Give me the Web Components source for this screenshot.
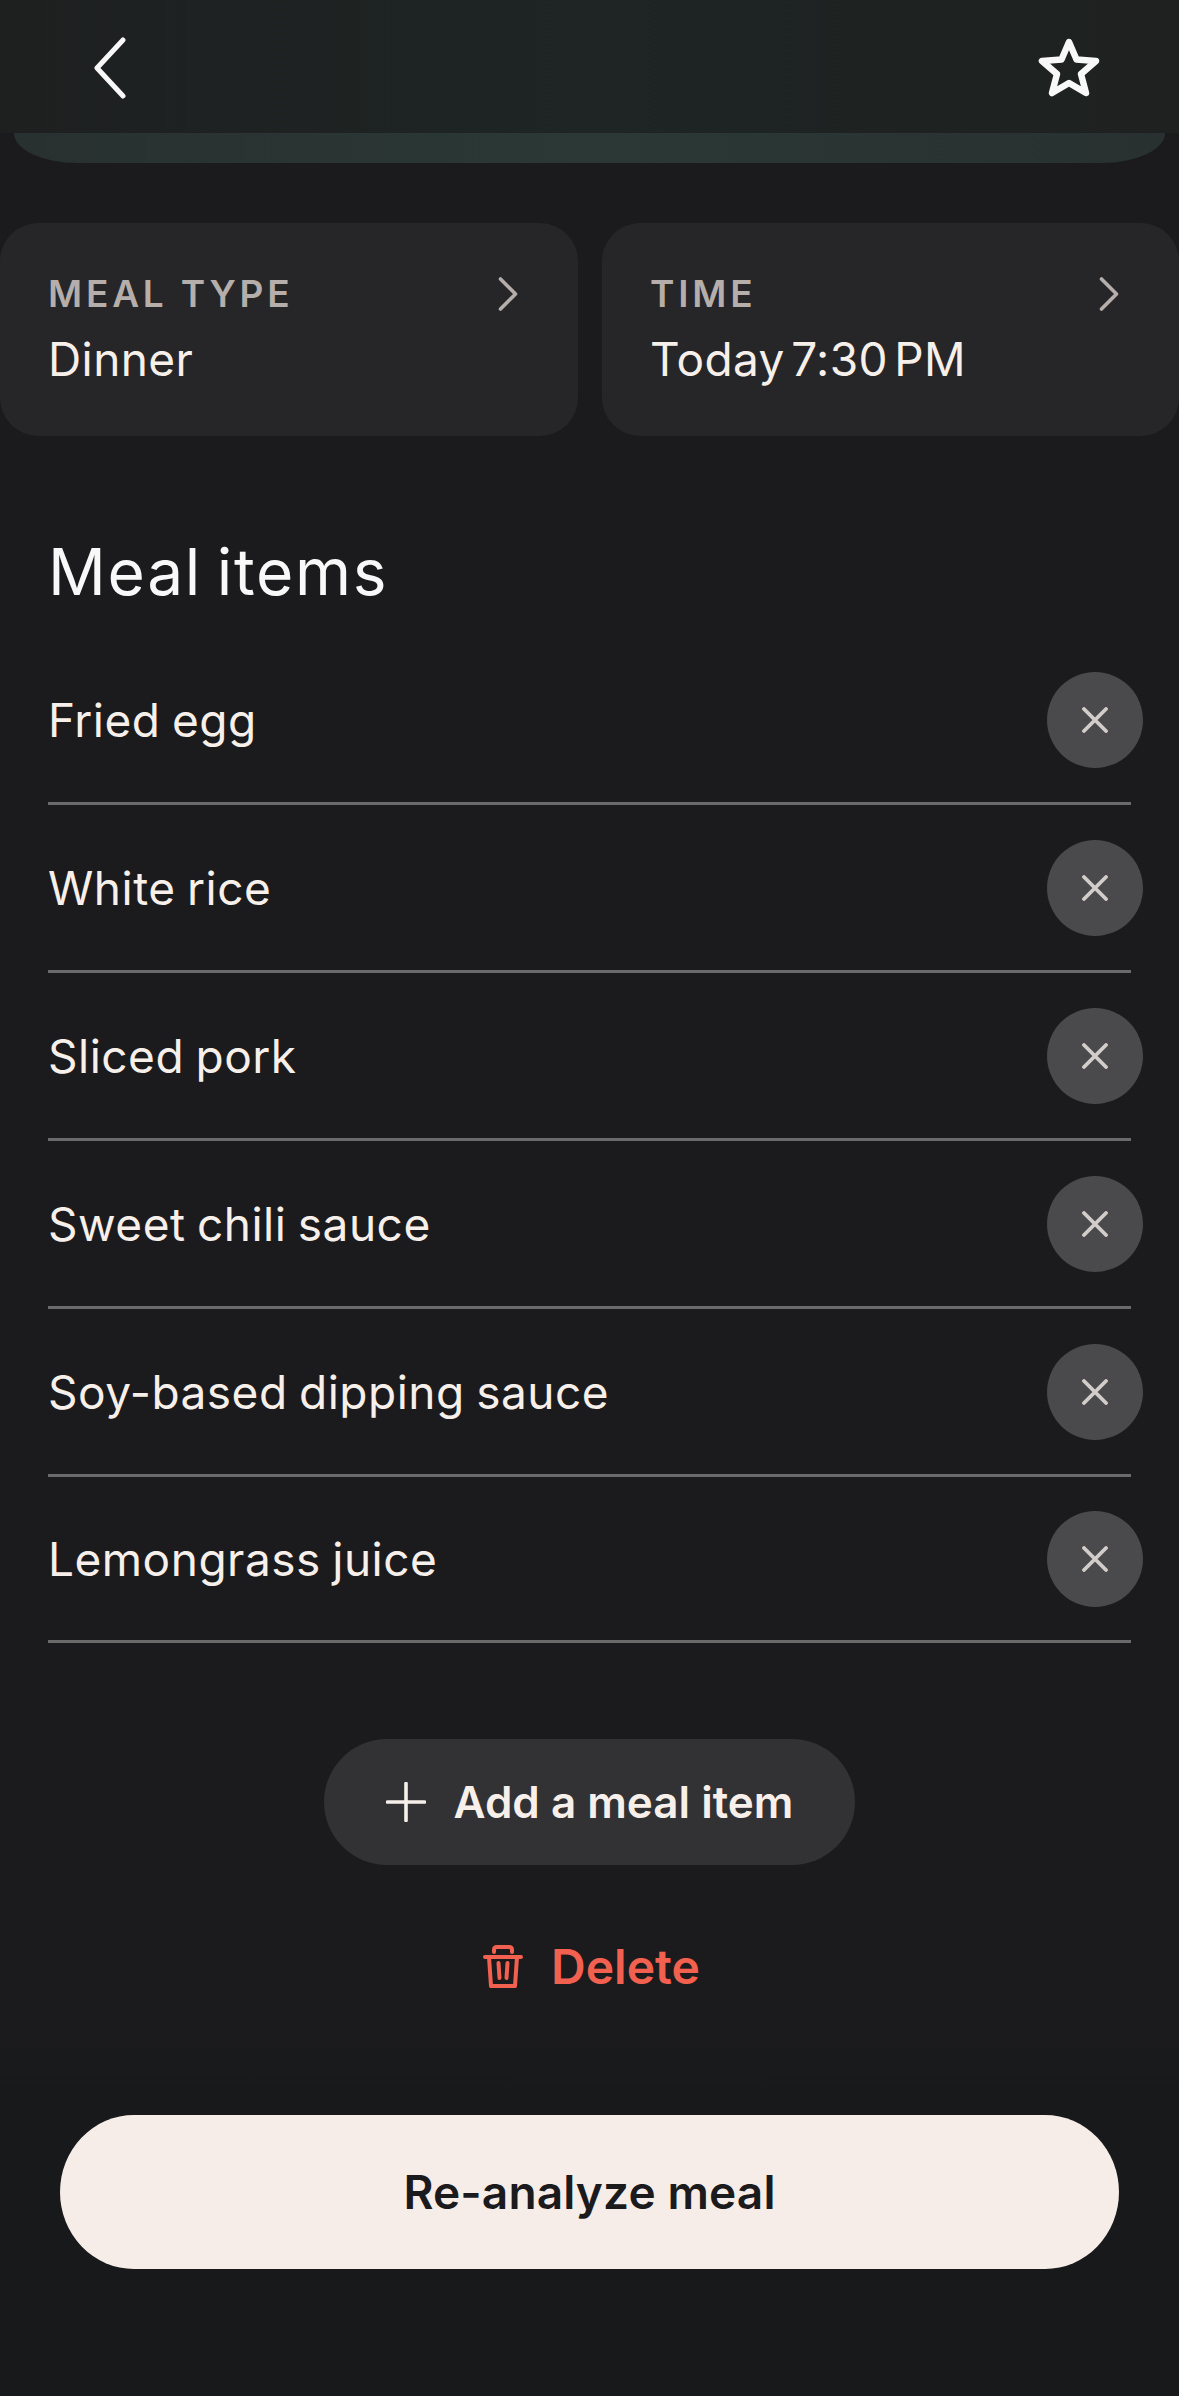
<!DOCTYPE html>
<html>
<head>
<meta charset="utf-8">
<style>
    html, body { margin: 0; padding: 0; background: #1b1b1d; }
    body { width: 1179px; height: 2396px; overflow: hidden; font-family: Inter, "Liberation Sans", sans-serif; }
</style>
</head>
<body>
<meal-screen>
    <top-bar></top-bar>
    <card-row>
        <info-card label="MEAL TYPE" value="Dinner"></info-card>
        <info-card label="TIME" value="Today 7:30 PM"></info-card>
    </card-row>
    <meal-list heading="Meal items">
        <meal-row>Fried egg</meal-row>
        <meal-row>White rice</meal-row>
        <meal-row>Sliced pork</meal-row>
        <meal-row>Sweet chili sauce</meal-row>
        <meal-row>Soy-based dipping sauce</meal-row>
        <meal-row last>Lemongrass juice</meal-row>
    </meal-list>
    <meal-actions></meal-actions>
    <bottom-action>Re-analyze meal</bottom-action>
</meal-screen>

<script>
class MealScreen extends HTMLElement {
    constructor() {
        super();
        this.attachShadow({ mode: 'open' });
        this.shadowRoot.innerHTML = `
            <style>
                :host { display: flex; flex-direction: column; width: 1179px; height: 2396px; color: #f7efea; }
            </style>
            <slot></slot>
        `;
    }
}

class TopBar extends HTMLElement {
    constructor() {
        super();
        this.attachShadow({ mode: 'open' });
        this.shadowRoot.innerHTML = `
            <style>
                :host { display: block; height: 163px; }
                .bar {
                    height: 133px;
                    display: flex;
                    justify-content: space-between;
                    align-items: flex-start;
                    padding: 37px 79px 0 92px;
                    box-sizing: border-box;
                    background: linear-gradient(90deg, #1e2020 0%, #1e2524 50%, #1e2120 100%);
                }
                .band {
                    height: 30px;
                    margin: 0 14px;
                    border-radius: 0 0 64px 64px / 0 0 30px 30px;
                    background: linear-gradient(90deg, #283130 0%, #2b3836 50%, #283130 100%);
                }
                svg { display: block; }
            </style>
            <div class="bar">
                <svg width="34" height="62" viewBox="0 0 34 62" fill="none" stroke="#f8f8f8" stroke-width="5" stroke-linecap="round" stroke-linejoin="round">
                    <path d="M31 3 L5 31 L31 59"/>
                </svg>
                <svg width="62" height="62" viewBox="0 0 62 62" fill="none" stroke="#f8f8f8" stroke-width="6.5" stroke-linejoin="round">
                    <path d="M31 5 L38.5 22.5 L58 24 L43 37 L48 56 L31 46 L14 56 L19 37 L4 24 L23.5 22.5 Z"/>
                </svg>
            </div>
            <div class="band"></div>
        `;
    }
}

class CardRow extends HTMLElement {
    constructor() {
        super();
        this.attachShadow({ mode: 'open' });
        this.shadowRoot.innerHTML = `
            <style>
                :host { display: grid; grid-template-columns: 578px 577px; gap: 24px; margin-top: 60px; }
            </style>
            <slot></slot>
        `;
    }
}

class InfoCard extends HTMLElement {
    constructor() {
        super();
        this.attachShadow({ mode: 'open' });
        this.shadowRoot.innerHTML = `
            <style>
                :host {
                    display: block;
                    height: 213px;
                    box-sizing: border-box;
                    padding: 51px 60px 0 48px;
                    border-radius: 38px;
                    background: #262628;
                }
                .head { display: flex; justify-content: space-between; align-items: center; height: 40px; }
                .label { font-size: 37px; font-weight: 600; letter-spacing: 3.8px; color: #b5aeaa; line-height: 40px; }
                .value { font-size: 46px; font-weight: 400; color: #f7efea; line-height: 56px; margin-top: 17px; letter-spacing: 0.4px; word-spacing: -7px; }
                svg { display: block; }
            </style>
            <div class="head">
                <span class="label"></span>
                <svg width="20" height="34" viewBox="0 0 20 34" fill="none" stroke="#b5aeaa" stroke-width="3.6" stroke-linecap="round" stroke-linejoin="round">
                    <path d="M2.5 2 L17.5 17 L2.5 32"/>
                </svg>
            </div>
            <div class="value"></div>
        `;
    }
    connectedCallback() {
        this.shadowRoot.querySelector('.label').textContent = this.getAttribute('label');
        this.shadowRoot.querySelector('.value').textContent = this.getAttribute('value');
    }
}

class MealList extends HTMLElement {
    constructor() {
        super();
        this.attachShadow({ mode: 'open' });
        this.shadowRoot.innerHTML = `
            <style>
                :host { display: block; padding-left: 48px; margin-top: 98px; }
                h2 { margin: 0 0 27px; font-size: 64px; font-weight: 400; line-height: 76px; color: #f8f8f8; letter-spacing: 1.7px; word-spacing: -5px; }
            </style>
            <h2></h2>
            <slot></slot>
        `;
    }
    connectedCallback() {
        this.shadowRoot.querySelector('h2').textContent = this.getAttribute('heading');
    }
}

class MealRow extends HTMLElement {
    constructor() {
        super();
        this.attachShadow({ mode: 'open' });
        this.shadowRoot.innerHTML = `
            <style>
                :host {
                    display: flex;
                    align-items: center;
                    justify-content: space-between;
                    width: 1083px;
                    height: 168px;
                    box-sizing: border-box;
                    border-bottom: 3px solid #6a6a6b;
                    font-size: 46px;
                    letter-spacing: 0.5px;
                    word-spacing: -2px;
                    color: #f7efea;
                }
                :host([last]) { height: 166px; }
                .close {
                    width: 96px;
                    height: 96px;
                    border-radius: 50%;
                    background: #4a4a4c;
                    display: flex;
                    align-items: center;
                    justify-content: center;
                    margin-right: -12px;
                }
                svg { display: block; }
            </style>
            <slot></slot>
            <div class="close">
                <svg width="26" height="26" viewBox="0 0 26 26" fill="none" stroke="#d3cdca" stroke-width="3.8" stroke-linecap="round">
                    <path d="M2 2 L24 24 M24 2 L2 24"/>
                </svg>
            </div>
        `;
    }
}

class MealActions extends HTMLElement {
    constructor() {
        super();
        this.attachShadow({ mode: 'open' });
        this.shadowRoot.innerHTML = `
            <style>
                :host { display: flex; flex-direction: column; align-items: center; margin-top: 96px; }
                .add {
                    width: 531px;
                    height: 126px;
                    box-sizing: border-box;
                    border-radius: 63px;
                    background: #323234;
                    display: flex;
                    align-items: center;
                    justify-content: center;
                    gap: 28px;
                    font-size: 44px;
                    font-weight: 600;
                    color: #f7efea;
                }
                .delete {
                    display: flex;
                    align-items: center;
                    gap: 28px;
                    margin: 79px 0 0 4px;
                    font-size: 48px;
                    font-weight: 600;
                    color: #f2604f;
                    line-height: 46px;
                }
                svg { display: block; }
            </style>
            <div class="add">
                <svg width="40" height="40" viewBox="0 0 40 40" fill="none" stroke="#f7efea" stroke-width="3.6" stroke-linecap="round">
                    <path d="M20 1.5 V38.5 M1.5 20 H38.5"/>
                </svg>
                <span>Add a meal item</span>
            </div>
            <div class="delete">
                <svg width="40" height="44" viewBox="0 0 40 44" fill="none" stroke="#f2604f" stroke-width="4" stroke-linecap="round" stroke-linejoin="round">
                    <path d="M2 12 H38 M6 12 L8 41 H32 L34 12 M11 7 V5 Q11 2 14 2 H26 Q29 2 29 5 V7 M15.5 18 L16.5 33 M24.5 18 L23.5 33"/>
                </svg>
                <span>Delete</span>
            </div>
        `;
    }
}

class BottomAction extends HTMLElement {
    constructor() {
        super();
        this.attachShadow({ mode: 'open' });
        this.shadowRoot.innerHTML = `
            <style>
                :host {
                    display: block;
                    flex: 1;
                    margin-top: 40px;
                    padding: 85px 60px 0;
                    background: linear-gradient(#1b1b1d, #17191b 70px);
                }
                .btn {
                    display: flex;
                    align-items: center;
                    justify-content: center;
                    height: 154px;
                    border-radius: 74px / 77px;
                    background: #f7ede8;
                    color: #1b1b1d;
                    font-size: 46px;
                    font-weight: 600;
                    letter-spacing: 0.15px;
                }
            </style>
            <div class="btn"><slot></slot></div>
        `;
    }
}

customElements.define('meal-screen', MealScreen);
customElements.define('top-bar', TopBar);
customElements.define('card-row', CardRow);
customElements.define('info-card', InfoCard);
customElements.define('meal-list', MealList);
customElements.define('meal-row', MealRow);
customElements.define('meal-actions', MealActions);
customElements.define('bottom-action', BottomAction);
</script>
</body>
</html>
